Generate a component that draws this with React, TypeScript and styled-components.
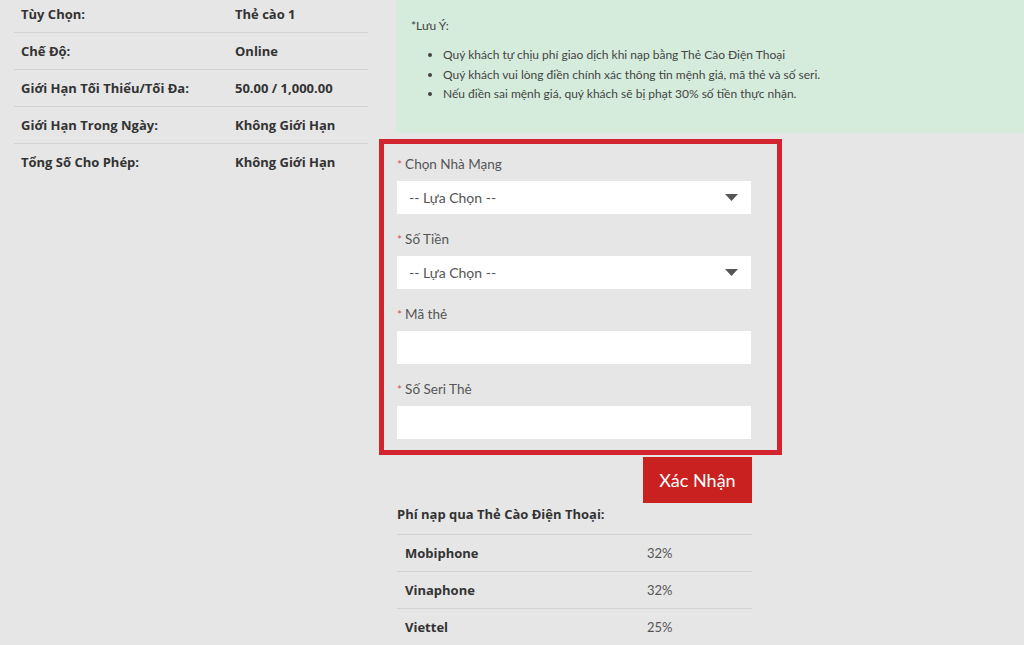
import React from "react";
import styled, { createGlobalStyle } from "styled-components";

const GlobalStyle = createGlobalStyle`
  html, body {
    margin: 0;
    padding: 0;
    background: #e6e6e6;
    font-family: Lato, "Liberation Sans", sans-serif;
    color: #333;
  }
  * { box-sizing: border-box; }
`;

const boldFont = `"Open Sans", "Noto Sans", sans-serif`;

const Page = styled.div`
  display: flex;
  align-items: flex-start;
  width: 1024px;
  height: 645px;
  overflow: hidden;
`;

const LeftCol = styled.div`
  width: 354px;
  margin-left: 14px;
  margin-top: -5px;
  flex-shrink: 0;
`;

const InfoRow = styled.div`
  display: grid;
  grid-template-columns: 214px 1fr;
  align-items: center;
  height: 37px;
  padding-left: 7px;
  font-family: ${boldFont};
  font-weight: 700;
  font-size: 13px;
  color: #333;
  & + & {
    border-top: 1px solid #d2d2d2;
  }
`;

const RightCol = styled.div`
  flex: 1;
  margin-left: 11px;
  display: flex;
  flex-direction: column;
`;

const NotePanel = styled.div`
  margin-left: 17px;
  height: 133px;
  background: #d5ecdc;
  padding: 17px 15px 0 15px;
  font-size: 12px;
  color: #444;
`;

const NoteTitle = styled.div`
  line-height: 18px;
`;

const NoteList = styled.ul`
  margin: 10px 0 0 0;
  padding-left: 32px;
  line-height: 19.5px;
`;

const FormBox = styled.div`
  margin-top: 6px;
  width: 403px;
  border: 5px solid #d3232f;
  padding: 10px 26px 11px 13px;
  display: flex;
  flex-direction: column;
  gap: 15px;
`;

const Field = styled.div`
  display: flex;
  flex-direction: column;
  gap: 6px;
`;

const Label = styled.label`
  font-size: 13.5px;
  line-height: 20px;
  color: #555;
`;

const Star = styled.span`
  color: #d9545c;
  margin-right: 3px;
  font-size: 12px;
`;

const SelectBox = styled.div`
  position: relative;
  height: 33px;
  background: #fff;
  display: flex;
  align-items: center;
  padding-left: 12px;
  font-size: 14px;
  color: #555;
`;

const Arrow = styled.svg`
  position: absolute;
  right: 13px;
  top: 13px;
`;

const TextInput = styled.div`
  height: 33px;
  background: #fff;
`;

const Below = styled.div`
  margin-left: 18px;
  width: 355px;
  display: flex;
  flex-direction: column;
`;

const ConfirmButton = styled.button`
  align-self: flex-end;
  margin-top: 2px;
  width: 109px;
  height: 46px;
  border: none;
  background: #c9211f;
  color: #fff;
  font-family: inherit;
  font-size: 18px;
  padding: 0;
`;

const FeeTitle = styled.div`
  margin-top: 1px;
  line-height: 20px;
  font-family: ${boldFont};
  font-weight: 700;
  font-size: 13px;
  color: #333;
`;

const FeeTable = styled.div`
  margin-top: 10px;
`;

const FeeRow = styled.div`
  display: grid;
  grid-template-columns: 242px 1fr;
  align-items: center;
  height: 37px;
  padding-left: 8px;
  border-top: 1px solid #d2d2d2;
  font-size: 13px;
`;

const FeeName = styled.span`
  font-family: ${boldFont};
  font-weight: 700;
  color: #333;
`;

const FeeValue = styled.span`
  color: #555;
`;

const info: [string, string][] = [
  ["Tùy Chọn:", "Thẻ cào 1"],
  ["Chế Độ:", "Online"],
  ["Giới Hạn Tối Thiểu/Tối Đa:", "50.00 / 1,000.00"],
  ["Giới Hạn Trong Ngày:", "Không Giới Hạn"],
  ["Tổng Số Cho Phép:", "Không Giới Hạn"],
];

const fees: [string, string][] = [
  ["Mobiphone", "32%"],
  ["Vinaphone", "32%"],
  ["Viettel", "25%"],
];

const DownArrow = () => (
  <Arrow width="13" height="7" viewBox="0 0 13 7">
    <path d="M0 0 H13 L6.5 7 Z" fill="#555" />
  </Arrow>
);

export default function App() {
  return (
    <>
      <GlobalStyle />
      <Page>
        <LeftCol>
          {info.map(([k, v]) => (
            <InfoRow key={k}>
              <span>{k}</span>
              <span>{v}</span>
            </InfoRow>
          ))}
        </LeftCol>
        <RightCol>
          <NotePanel>
            <NoteTitle>*Lưu Ý:</NoteTitle>
            <NoteList>
              <li>Quý khách tự chịu phí giao dịch khi nạp bằng Thẻ Cào Điện Thoại</li>
              <li>Quý khách vui lòng điền chính xác thông tin mệnh giá, mã thẻ và số seri.</li>
              <li>Nếu điền sai mệnh giá, quý khách sẽ bị phạt 30% số tiền thực nhận.</li>
            </NoteList>
          </NotePanel>
          <FormBox>
            <Field>
              <Label><Star>*</Star>Chọn Nhà Mạng</Label>
              <SelectBox>-- Lựa Chọn --<DownArrow /></SelectBox>
            </Field>
            <Field>
              <Label><Star>*</Star>Số Tiền</Label>
              <SelectBox>-- Lựa Chọn --<DownArrow /></SelectBox>
            </Field>
            <Field>
              <Label><Star>*</Star>Mã thẻ</Label>
              <TextInput />
            </Field>
            <Field>
              <Label><Star>*</Star>Số Seri Thẻ</Label>
              <TextInput />
            </Field>
          </FormBox>
          <Below>
            <ConfirmButton>Xác Nhận</ConfirmButton>
            <FeeTitle>Phí nạp qua Thẻ Cào Điện Thoại:</FeeTitle>
            <FeeTable>
              {fees.map(([n, v]) => (
                <FeeRow key={n}>
                  <FeeName>{n}</FeeName>
                  <FeeValue>{v}</FeeValue>
                </FeeRow>
              ))}
            </FeeTable>
          </Below>
        </RightCol>
      </Page>
    </>
  );
}
